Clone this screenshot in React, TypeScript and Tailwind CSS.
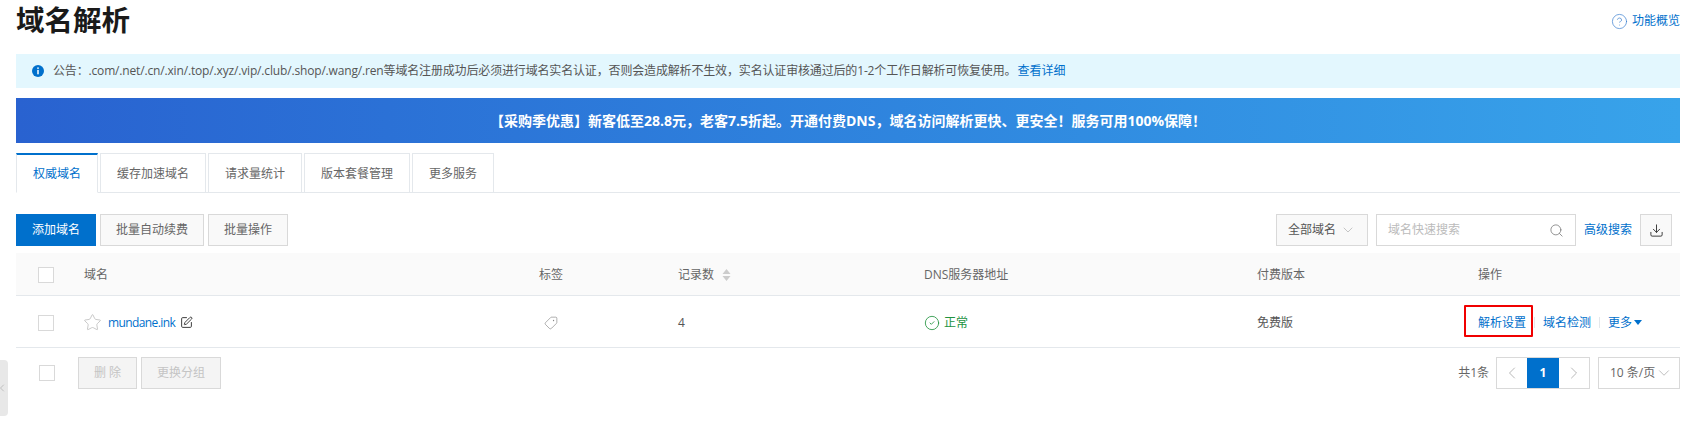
import React from "react";
import { ChevronDown, ChevronLeft, ChevronRight, Search, Download, Star, SquarePen, Tag, CircleCheck, CircleHelp } from "lucide-react";

const font = "font-['Open_Sans','Noto_Sans_CJK_SC',sans-serif]";
const Check = ({ cls = "" }: { cls?: string }) => <span className={`block w-[16px] h-[16px] border border-[#d9d9d9] bg-white ${cls}`} />;
const tabs = ["权威域名", "缓存加速域名", "请求量统计", "版本套餐管理", "更多服务"];
const cols = "grid grid-cols-[68px_455px_139px_246px_333px_221px_1fr] items-center";

export default function App() {
  return (
    <div className={`${font} w-[1694px] h-[436px] bg-white relative overflow-hidden pl-[16px] pr-[14px] text-[12px] text-[#555]`}>
      <div className="h-[54px] flex justify-between items-start">
        <h1 className="text-[28.5px] font-bold leading-[36px] text-[#1a1a1a] mt-[2px]">域名解析</h1>
        <a className="flex items-center gap-[4px] mt-[12px] text-[#0070cc]">
          <CircleHelp size={17} strokeWidth={1} className="text-[#3b7fd0]" />功能概览
        </a>
      </div>

      <div className="h-[34px] bg-[#e3f7fe] flex items-center pl-[16px] text-[#555]">
        <svg width="12" height="12" viewBox="0 0 12 12" className="mr-[9px]">
          <circle cx="6" cy="6" r="6" fill="#0070cc" />
          <rect x="5.25" y="2.4" width="1.5" height="1.5" fill="#fff" />
          <rect x="5.25" y="4.9" width="1.5" height="4.4" fill="#fff" />
        </svg>
        <span className="tracking-[-0.0133em]">公告：.com/.net/.cn/.xin/.top/.xyz/.vip/.club/.shop/.wang/.ren等域名注册成功后必须进行域名实名认证，否则会造成解析不生效，实名认证审核通过后的1-2个工作日解析可恢复使用。</span>
        <a className="text-[#0070cc] ml-[1px]">查看详细</a>
      </div>

      <div className="h-[45px] mt-[10px] bg-gradient-to-r from-[#2962d0] to-[#38a3ea] flex items-center justify-center text-white font-bold text-[14px]">
        【采购季优惠】新客低至28.8元，老客7.5折起。开通付费DNS，域名访问解析更快、更安全！服务可用100%保障！
      </div>

      <div className="mt-[10px] h-[40px] flex gap-[2px] border-b border-[#e4e8ec]">
        {tabs.map((t, i) => (
          <div key={t} className={`px-[16px] h-[40px] flex items-center justify-center border-x ${i === 0 ? "border-t-2 border-t-[#0070cc] border-x-[#e4e8ec] border-b border-b-white text-[#0070cc]" : "border-t border-[#e4e8ec] text-[#666]"}`}>{t}</div>
        ))}
      </div>

      <div className="mt-[21px] h-[33px] flex items-start justify-between pr-[8px]">
        <div className="flex gap-[4px]">
          <button className="w-[80px] h-[32px] bg-[#0070cc] text-white">添加域名</button>
          <button className="w-[104px] h-[32px] bg-[#f9f9f9] border border-[#d9d9d9] text-[#666]">批量自动续费</button>
          <button className="w-[80px] h-[32px] bg-[#f9f9f9] border border-[#d9d9d9] text-[#666]">批量操作</button>
        </div>
        <div className="flex items-center">
          <div className="w-[92px] h-[32px] border border-[#d9d9d9] bg-[#f9f9f9] flex items-center pl-[11px] text-[#555] mr-[8px]">
            全部域名<ChevronDown size={16} strokeWidth={1} className="ml-[4px] text-[#aaa]" />
          </div>
          <div className="w-[200px] h-[32px] border border-[#d9d9d9] flex items-center justify-between pl-[11px] pr-[11px] text-[#bbb] mr-[8px]">
            域名快速搜索<Search size={15} strokeWidth={1.25} className="text-[#777]" />
          </div>
          <a className="text-[#0070cc] mr-[8px]">高级搜索</a>
          <div className="w-[32px] h-[32px] border border-[#d9d9d9] bg-[#f9f9f9] flex items-center justify-center">
            <Download size={15} strokeWidth={1.5} className="text-[#333]" />
          </div>
        </div>
      </div>

      <div className={`${cols} mt-[6px] h-[43px] pt-[1px] bg-[#fafafa] border-b border-[#e4e8ec] text-[#666]`}>
        <div className="pl-[22px]"><Check /></div>
        <div>域名</div>
        <div>标签</div>
        <div className="flex items-center">记录数
          <svg width="9" height="14" viewBox="0 0 9 14" className="ml-[8px]"><path d="M4.5 1 8.5 6H.5z M4.5 13 .5 8h8z" fill="#ccc" /></svg>
        </div>
        <div>DNS服务器地址</div>
        <div>付费版本</div>
        <div>操作</div>
      </div>

      <div className={`${cols} h-[52px] pt-[2px] border-b border-[#e4e8ec] text-[#555]`}>
        <div className="pl-[22px]"><Check /></div>
        <div className="flex items-center">
          <Star size={19} strokeWidth={1} className="text-[#bbb] mr-[6px] -ml-[1px]" />
          <a className="text-[#0070cc] tracking-[-0.05em]">mundane.ink</a>
          <SquarePen size={13} strokeWidth={1.75} className="text-[#333] ml-[5px]" />
        </div>
        <div><Tag size={14} strokeWidth={1} className="text-[#777] rotate-90 ml-[5px]" /></div>
        <div>4</div>
        <div className="flex items-center gap-[4px] text-[#22933f]"><CircleCheck size={16} strokeWidth={1.25} />正常</div>
        <div>免费版</div>
        <div className="flex items-center text-[#0070cc] whitespace-nowrap">
          <a>解析设置</a>
          <span className="w-px h-[11px] bg-[#e4e8ec] ml-[8px] mr-[8px]" />
          <a>域名检测</a>
          <span className="w-px h-[11px] bg-[#e4e8ec] ml-[8px] mr-[8px]" />
          <a className="flex items-center">更多<svg width="8" height="5" viewBox="0 0 8 5" className="ml-[2px]"><path d="M0 0h8L4 5z" fill="#0070cc" /></svg></a>
        </div>
      </div>

      <div className="mt-[9px] flex items-start justify-between">
        <div className="flex items-center">
          <Check cls="ml-[23px] mr-[23px]" />
          <button className="w-[59px] h-[32px] bg-[#f4f4f4] border border-[#d9d9d9] text-[#c4c4c4] mr-[4px]">删 除</button>
          <button className="w-[80px] h-[32px] bg-[#f4f4f4] border border-[#d9d9d9] text-[#c4c4c4]">更换分组</button>
        </div>
        <div className="flex items-center text-[#666]">
          <span className="mr-[7px]">共1条</span>
          <div className="h-[32px] flex border border-[#d9d9d9]">
            <span className="w-[30px] flex items-center justify-center"><ChevronLeft size={20} strokeWidth={1} className="text-[#aaa]" /></span>
            <span className="w-[32px] bg-[#0070cc] text-white font-bold flex items-center justify-center">1</span>
            <span className="w-[30px] flex items-center justify-center"><ChevronRight size={20} strokeWidth={1} className="text-[#aaa]" /></span>
          </div>
          <div className="ml-[8px] w-[82px] h-[32px] border border-[#d9d9d9] flex items-center pl-[11px]">10 条/页<ChevronDown size={18} strokeWidth={1} className="text-[#aaa]" /></div>
        </div>
      </div>

      <div className="absolute left-0 top-[360px] w-[8px] h-[56px] bg-[#e8e8e8] rounded-r-[4px] flex items-center justify-end overflow-hidden">
        <ChevronLeft size={12} strokeWidth={1} className="text-[#999] shrink-0" />
      </div>
      <div className="absolute left-[1464px] top-[305px] w-[69px] h-[32px] border-[2px] border-[#f00000] rounded-[1px]" />
    </div>
  );
}
